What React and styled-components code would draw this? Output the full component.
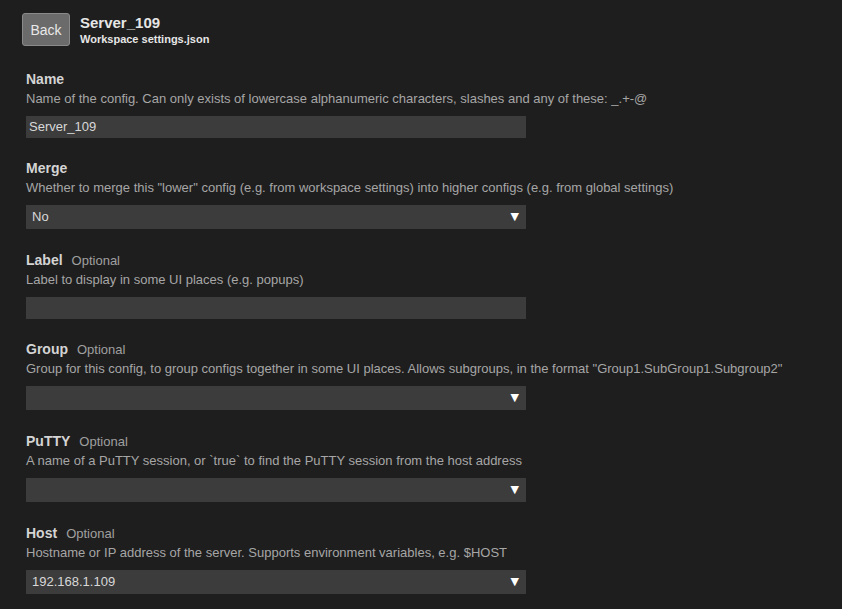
import React from "react";
import styled, { createGlobalStyle } from "styled-components";

const GlobalStyle = createGlobalStyle`
  body {
    margin: 0;
    background: #1e1e1e;
    font-family: "Liberation Sans", Arial, sans-serif;
    color: #cccccc;
  }
`;

const fields = [
  {
    name: "Name",
    desc: "Name of the config. Can only exists of lowercase alphanumeric characters, slashes and any of these: _.+-@",
    kind: "input",
    value: "Server_109",
  },
  {
    name: "Merge",
    desc: 'Whether to merge this "lower" config (e.g. from workspace settings) into higher configs (e.g. from global settings)',
    kind: "select",
    value: "No",
  },
  {
    name: "Label",
    optional: true,
    desc: "Label to display in some UI places (e.g. popups)",
    kind: "input",
    value: "",
  },
  {
    name: "Group",
    optional: true,
    desc: 'Group for this config, to group configs together in some UI places. Allows subgroups, in the format "Group1.SubGroup1.Subgroup2"',
    kind: "select",
    value: "",
  },
  {
    name: "PuTTY",
    optional: true,
    desc: "A name of a PuTTY session, or `true` to find the PuTTY session from the host address",
    kind: "select",
    value: "",
  },
  {
    name: "Host",
    optional: true,
    desc: "Hostname or IP address of the server. Supports environment variables, e.g. $HOST",
    kind: "select",
    value: "192.168.1.109",
  },
];

const App = () => {
  return (
    <Page>
      <GlobalStyle />
      <Header>
        <BackButton>Back</BackButton>
        <Titles>
          <Title>Server_109</Title>
          <Subtitle>Workspace settings.json</Subtitle>
        </Titles>
      </Header>
      <Form>
        {fields.map((f) => (
          <Section key={f.name}>
            <LabelRow>
              <FieldName>{f.name}</FieldName>
              {f.optional && <Optional>Optional</Optional>}
            </LabelRow>
            <Desc>{f.desc}</Desc>
            {f.kind === "input" ? (
              <TextBox>{f.value}</TextBox>
            ) : (
              <SelectBox>
                <span>{f.value}</span>
                <Arrow>▼</Arrow>
              </SelectBox>
            )}
          </Section>
        ))}
      </Form>
    </Page>
  );
};

const Page = styled.div`
  padding: 13px 0 0 0;
`;

const Header = styled.header`
  display: flex;
  align-items: flex-start;
  gap: 10px;
  padding-left: 22px;
`;

const BackButton = styled.button`
  width: 48px;
  height: 33px;
  background: #6b6b6b;
  border: 1px solid #8a8a8a;
  border-radius: 3px;
  color: #e8e8e8;
  font-family: "Liberation Sans", Arial, sans-serif;
  font-size: 14px;
  padding: 0;
`;

const Titles = styled.div`
  display: flex;
  flex-direction: column;
  padding-top: 1px;
`;

const Title = styled.div`
  font-size: 15px;
  font-weight: bold;
  color: #e6e6e6;
  line-height: 18px;
`;

const Subtitle = styled.div`
  font-size: 11px;
  font-weight: bold;
  color: #e6e6e6;
  line-height: 14px;
`;

const Form = styled.div`
  padding: 21px 0 0 26px;
`;

const Section = styled.section`
  padding-top: 2px;
  margin-bottom: 19px;
`;

const LabelRow = styled.div`
  display: flex;
  align-items: baseline;
  gap: 9px;
  height: 20px;
  line-height: 20px;
  overflow: hidden;
`;

const FieldName = styled.span`
  font-size: 14px;
  font-weight: bold;
  color: #d4d4d4;
`;

const Optional = styled.span`
  font-size: 13px;
  color: #a0a0a0;
`;

const Desc = styled.div`
  margin-top: 1px;
  height: 18px;
  font-size: 13px;
  color: #a6a6a6;
  line-height: 18px;
`;

const TextBox = styled.div`
  margin: 8px 0 -1px;
  width: 500px;
  height: 22px;
  box-sizing: border-box;
  background: #3c3c3c;
  color: #d8d8d8;
  font-size: 13px;
  line-height: 22px;
  padding: 0 3px;
`;

const SelectBox = styled.div`
  margin-top: 8px;
  width: 500px;
  height: 24px;
  box-sizing: border-box;
  background: #3c3c3c;
  color: #d8d8d8;
  font-size: 13px;
  line-height: 24px;
  padding: 0 7px 0 6px;
  display: flex;
  justify-content: space-between;
  align-items: center;
`;

const Arrow = styled.span`
  color: #ffffff;
  font-size: 11px;
  font-family: "DejaVu Sans", sans-serif;
`;

export default App;
